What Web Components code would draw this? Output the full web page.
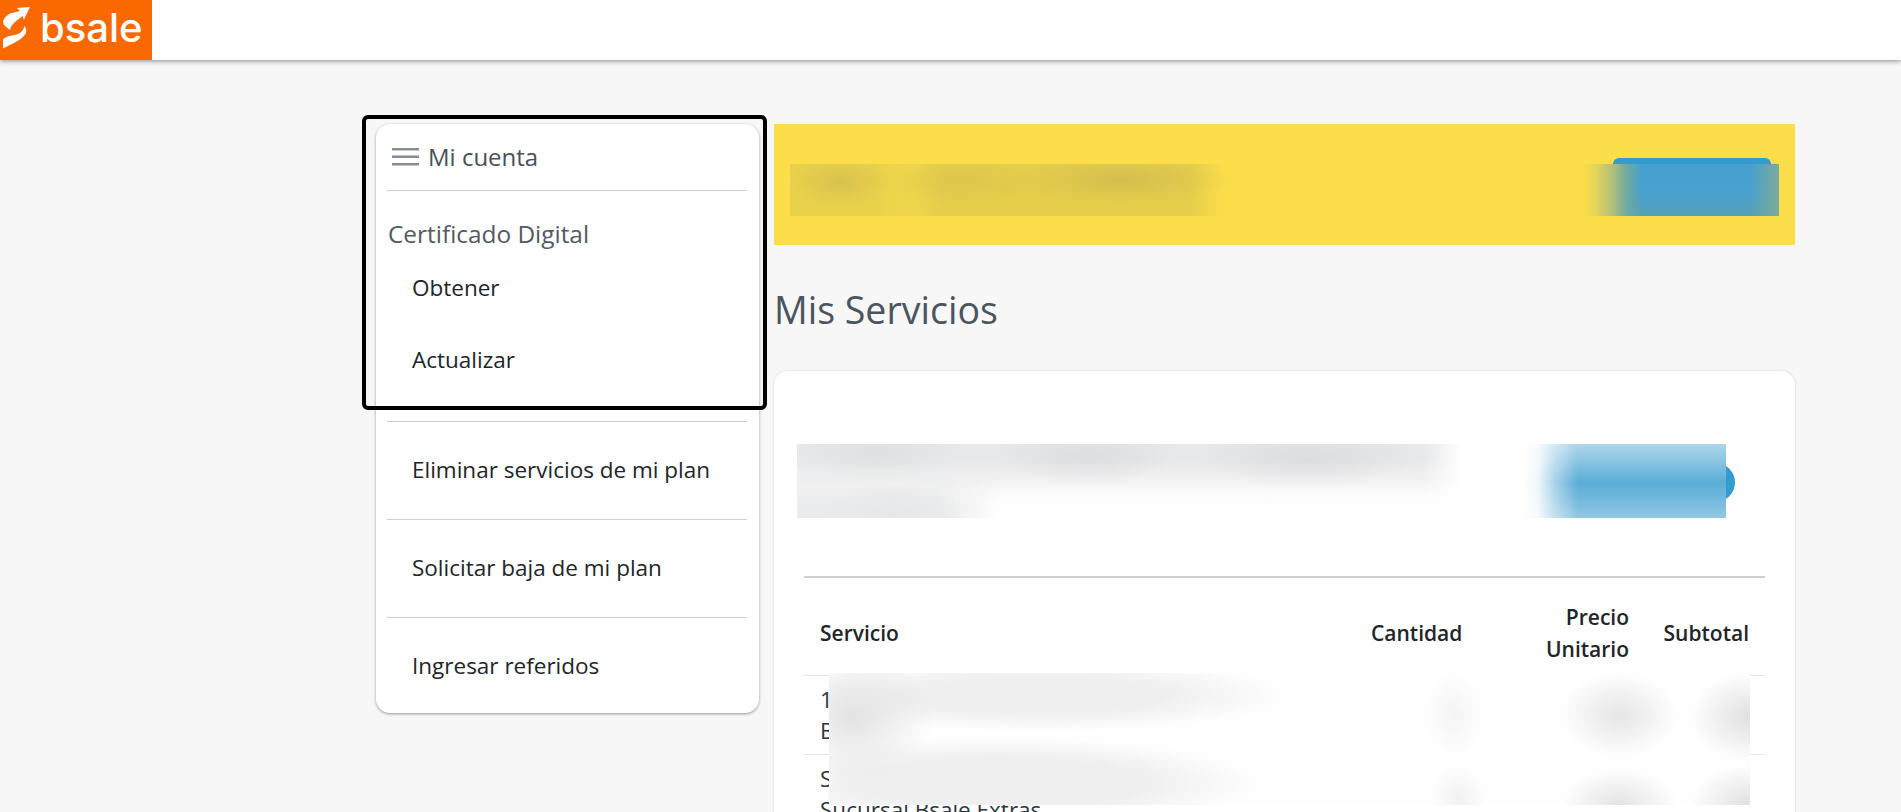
<!DOCTYPE html>
<html lang="es">
<head>
<meta charset="utf-8">
<title>Mi cuenta</title>
<style>
  html, body { margin: 0; height: 812px; overflow: hidden; background: #f7f7f7; }
  body { font-family: "Open Sans", "Liberation Sans", sans-serif; color: #212529; }
  .page { display: flex; align-items: flex-start; gap: 15px; padding: 64px 0 0 376px; }
</style>
</head>
<body>
<app-header></app-header>
<div class="page">
  <side-menu>
    <side-item>Obtener</side-item>
    <side-item>Actualizar</side-item>
    <side-item slot="rest" boxed>Eliminar servicios de mi plan</side-item>
    <side-item slot="rest" boxed>Solicitar baja de mi plan</side-item>
    <side-item slot="rest" boxed>Ingresar referidos</side-item>
  </side-menu>
  <main-panel>
    <yellow-banner slot="banner"></yellow-banner>
    <services-card>
      <service-table></service-table>
    </services-card>
  </main-panel>
</div>

<script>
// parche borroso encima del contenido, el fondo va en style
class BlurPatch extends HTMLElement {
  constructor() {
    super();
    this.attachShadow({ mode: 'open' });
    this.shadowRoot.innerHTML = `<style>:host { display: block; position: absolute; }</style>`;
  }
}
customElements.define('blur-patch', BlurPatch);

class AppHeader extends HTMLElement {
  constructor() {
    super();
    this.attachShadow({ mode: 'open' });
    this.shadowRoot.innerHTML = `
      <style>
        :host { display: flex; height: 60px; background: #fff; box-shadow: 0 1px 5px rgba(0,0,0,.45); position: relative; }
        .logo { width: 152px; background: #fa6900; display: flex; align-items: center; color: #fff; }
        svg { width: 34px; height: 60px; flex: none; margin-left: 0; margin-right: 6px; }
        span { font: 500 40px/60px Inter, sans-serif; margin-top: -4px; }
      </style>
      <div class="logo">
        <svg viewBox="0 0 34 60" fill="#fff">
          <path d="M3 21 Q5 16 10 13.500 L20 11 L17 8 L30 7 L24 19.500 L22.500 16 L15 22 Q11 25 10 30 L5 26 Q3 24 3 21 Z"/>
          <path d="M24.500 26 Q27.500 30 25.500 34 Q22 39 14 43 L3 48.500 L3 39.500 Q5 37 10 36 L18 34 Q23 32 24.500 26 Z"/>
        </svg>
        <span>bsale</span>
      </div>`;
  }
}
customElements.define('app-header', AppHeader);

class SideItem extends HTMLElement {
  constructor() {
    super();
    this.attachShadow({ mode: 'open' });
    this.shadowRoot.innerHTML = `
      <style>
        :host { display: flex; align-items: center; height: 72px; padding-left: 25px; font-size: 22.500px; color: #212529; }
        :host([boxed]) { height: 95px; padding-bottom: 2px; border-top: 1px solid #cfcfcf; }
      </style>
      <slot></slot>`;
  }
}
customElements.define('side-item', SideItem);

class SideMenu extends HTMLElement {
  constructor() {
    super();
    this.attachShadow({ mode: 'open' });
    this.shadowRoot.innerHTML = `
      <style>
        :host { display: block; position: relative; width: 383px; flex: none; height: 589px; background: #fff; border-radius: 14px; box-shadow: 0 1px 3px rgba(0,0,0,.4); }
        .wrap { padding: 0 12px 0 11px; }
        .top { display: flex; align-items: center; height: 66px; border-bottom: 1px solid #cfcfcf; color: #495057; font-size: 24px; }
        .top span { margin-top: -2px; }
        svg { width: 27px; height: 20px; margin: 0 9px 0 5px; flex: none; }
        h3 { margin: 0; padding: 25px 0 0 1px; height: 37px; font: 400 24.400px/36px "Open Sans", sans-serif; color: #515a65; }
        .items { margin-top: -2px; }
        .sub { height: 26px; }
        .frame { position: absolute; left: -14px; top: -9px; width: 397px; height: 287px; border: 4px solid #000; border-radius: 6px; pointer-events: none; }
      </style>
      <div class="wrap">
        <div class="top">
          <svg viewBox="0 0 27 20" fill="#8a8d93"><rect y="1" width="27" height="2.500"/><rect y="8.500" width="27" height="2.500"/><rect y="16" width="27" height="2.500"/></svg>
          <span>Mi cuenta</span>
        </div>
        <h3>Certificado Digital</h3>
        <div class="items"><slot></slot></div>
        <div class="sub"></div>
        <slot name="rest"></slot>
      </div>
      <div class="frame"></div>`;
  }
}
customElements.define('side-menu', SideMenu);

class MainPanel extends HTMLElement {
  constructor() {
    super();
    this.attachShadow({ mode: 'open' });
    this.shadowRoot.innerHTML = `
      <style>
        :host { display: block; width: 1021px; flex: none; }
        h1 { margin: 0; height: 126px; font: 400 37.500px/130px "Open Sans", sans-serif; color: #4a5560; }
      </style>
      <slot name="banner"></slot>
      <h1>Mis Servicios</h1>
      <slot></slot>`;
  }
}
customElements.define('main-panel', MainPanel);

class YellowBanner extends HTMLElement {
  constructor() {
    super();
    this.attachShadow({ mode: 'open' });
    this.shadowRoot.innerHTML = `
      <style>
        :host { display: flex; position: relative; justify-content: flex-end; align-items: center; height: 121px; padding: 0 24px; background: #fcdd4a; box-sizing: border-box; }
        .btn { width: 158px; height: 53px; background: #349bcf; border-radius: 6px; }
      </style>
      <div class="btn"></div>
      <blur-patch style="left:16px;top:40px;width:445px;height:52px;background:
        radial-gradient(ellipse 50px 24px at 50px 18px, rgba(170,155,85,.28), transparent),
        radial-gradient(ellipse 80px 22px at 170px 18px, rgba(170,155,85,.16), transparent),
        radial-gradient(ellipse 110px 24px at 330px 16px, rgba(170,155,85,.30), transparent),
        linear-gradient(to right, #e9d14b 0, #e9d14b 85px, #eed54b 105px, #eed54b 125px, #e6ce4b 150px, #e6ce4b 400px, #f3d74b 420px, #fcdd4a 436px)"></blur-patch>
      <blur-patch style="left:806px;top:40px;width:199px;height:52px;background:
        linear-gradient(to right, #fcdd4a 0, #fcdd4a 3px, #e3d45c 16px, #b5c07a 32px, #70ab9e 46px, rgba(70,160,205,0) 62px, rgba(70,160,205,0) 170px, rgba(125,172,150,.95) 199px),
        linear-gradient(to bottom, #459fd0 0, #48a1cf 55%, #55a0b8 100%)"></blur-patch>`;
  }
}
customElements.define('yellow-banner', YellowBanner);

class ServicesCard extends HTMLElement {
  constructor() {
    super();
    this.attachShadow({ mode: 'open' });
    this.shadowRoot.innerHTML = `
      <style>
        :host { display: block; position: relative; height: 600px; background: #fff; border-radius: 14px; box-shadow: 0 0 3px rgba(0,0,0,.14); padding: 92px 30px 0 30px; }
        .row { display: flex; justify-content: flex-end; padding-right: 30px; height: 39px; padding-bottom: 74px; border-bottom: 2px solid #cfcfcf; }
        .pill { width: 190px; height: 39px; border-radius: 20px; background: #349bcf; }
      </style>
      <div class="row"><div class="pill"></div></div>
      <slot></slot>
      <blur-patch style="left:23px;top:73px;width:668px;height:74px;background:
        radial-gradient(ellipse 75px 34px at 95px 74px, rgba(205,206,207,.9), transparent),
        radial-gradient(ellipse 80px 30px at 80px 8px, rgba(215,216,218,.5), transparent),
        radial-gradient(ellipse 90px 30px at 290px 12px, rgba(212,213,215,.55), transparent),
        radial-gradient(ellipse 110px 30px at 510px 14px, rgba(212,213,215,.6), transparent),
        linear-gradient(to right, rgba(255,255,255,0) 0, rgba(255,255,255,0) 625px, #fff 665px),
        linear-gradient(to bottom, #e7e8ea 0, #e7e8ea 16px, #f1f1f2 34px, #fbfbfb 50px, #fefefe 62px)"></blur-patch>
      <blur-patch style="left:23px;top:73px;width:200px;height:74px;background:
        linear-gradient(to right, rgba(232,233,234,.9) 0, rgba(232,233,234,.9) 140px, rgba(240,240,240,0) 200px);
        -webkit-mask-image: linear-gradient(to bottom, transparent 20px, #000 60px)"></blur-patch>
      <blur-patch style="left:749px;top:73px;width:203px;height:74px;background:
        linear-gradient(to right, #fff 0, rgba(255,255,255,.9) 15px, rgba(255,255,255,.45) 32px, rgba(255,255,255,0) 55px),
        linear-gradient(to bottom, #aed6eb 0, #7fbfe0 22px, #5cadd7 38px, #6db6dc 52px, #94c8e3 74px)"></blur-patch>
      <blur-patch style="left:55px;top:302px;width:921px;height:132px;background:
        radial-gradient(ellipse 80px 62px at 25px 44px, rgba(225,225,225,.95), transparent),
        radial-gradient(ellipse 250px 36px at 210px 22px, #efefef 50%, rgba(239,239,239,0)),
        radial-gradient(ellipse 260px 46px at 170px 110px, #efefef 55%, rgba(239,239,239,0)),
        radial-gradient(ellipse 28px 42px at 625px 42px, rgba(240,240,240,.7), transparent),
        radial-gradient(ellipse 28px 32px at 630px 125px, rgba(238,238,238,.8), transparent),
        radial-gradient(ellipse 58px 42px at 790px 42px, rgba(228,228,228,.95), transparent),
        radial-gradient(ellipse 58px 36px at 790px 132px, rgba(226,226,226,.95), transparent),
        radial-gradient(ellipse 60px 44px at 921px 44px, rgba(222,222,222,.95), transparent),
        radial-gradient(ellipse 60px 40px at 921px 132px, rgba(222,222,222,.95), transparent),
        #fefefe"></blur-patch>`;
  }
}
customElements.define('services-card', ServicesCard);

class ServiceTable extends HTMLElement {
  constructor() {
    super();
    this.attachShadow({ mode: 'open' });
    this.shadowRoot.innerHTML = `
      <style>
        :host { display: block; }
        table { width: 961px; table-layout: fixed; border-collapse: collapse; }
        th { font: 600 21px/32px "Open Sans", sans-serif; height: 97px; padding: 14px 16px 0; box-sizing: border-box; color: #212529; }
        td { font: 400 22.500px/31px "Open Sans", sans-serif; height: 77px; padding: 8px 16px; box-sizing: border-box; vertical-align: top; color: #2b3640; border-top: 1px solid #e4e4e4; white-space: nowrap; }
        .l { text-align: left; } .c { text-align: center; } .r { text-align: right; }
      </style>
      <table>
        <colgroup><col style="width:551px"><col style="width:123px"><col style="width:167px"><col style="width:120px"></colgroup>
        <tr><th class="l">Servicio</th><th class="c">Cantidad</th><th class="r">Precio<br>Unitario</th><th class="r">Subtotal</th></tr>
        <tr><td>1<br>B</td><td></td><td></td><td></td></tr>
        <tr><td>S<br>Sucursal Bsale Extras</td><td></td><td></td><td></td></tr>
      </table>`;
  }
}
customElements.define('service-table', ServiceTable);
</script>
</body>
</html>
